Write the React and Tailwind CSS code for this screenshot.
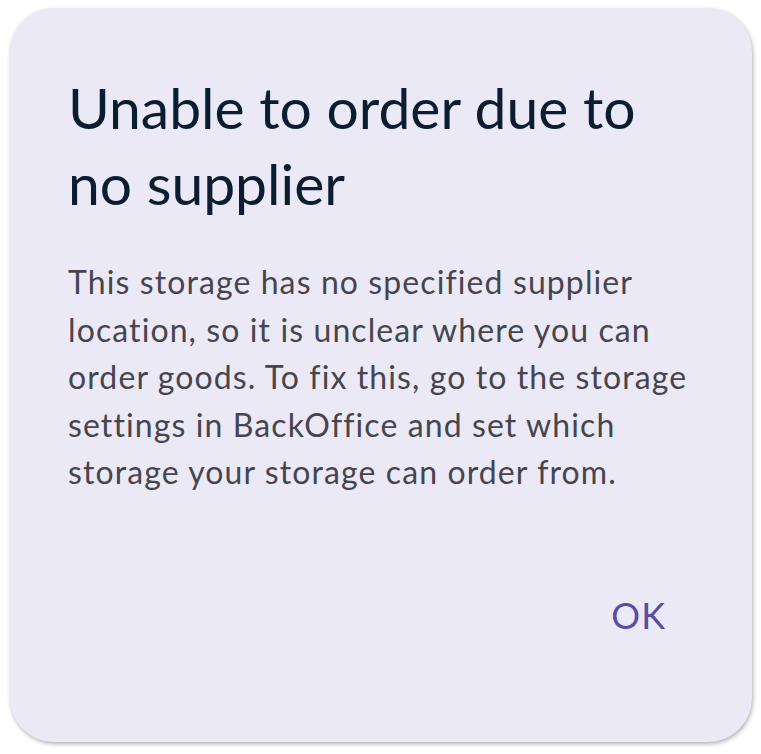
export default function App() {
  return (
    <div className="w-[761px] h-[754px] bg-white pt-[8px] pl-[10px]" style={{ fontFamily: "Lato, 'Open Sans', sans-serif" }}>
      <div className="w-[742px] h-[734px] rounded-[44px] bg-[#ECE9F6] shadow-[1px_2px_4px_rgba(0,0,0,0.3)] flex flex-col px-[58px] pt-[61px] pb-[100px]">
        <h1 className="text-[57px] leading-[76px] text-[#0B1E30] font-normal">
          Unable to order due to no supplier
        </h1>
        <p className="mt-[37px] text-[32px] tracking-[1.1px] leading-[47.5px] text-[#46454E]">
          This storage has no specified supplier location, so it is unclear where you can order goods. To fix this, go to the storage settings in BackOffice and set which storage your storage can order from.
        </p>
        <div className="mt-auto flex justify-end">
          <button className="text-[36px] tracking-[1px] text-[#5B4BA6] pr-[28px]">OK</button>
        </div>
      </div>
    </div>
  );
}
